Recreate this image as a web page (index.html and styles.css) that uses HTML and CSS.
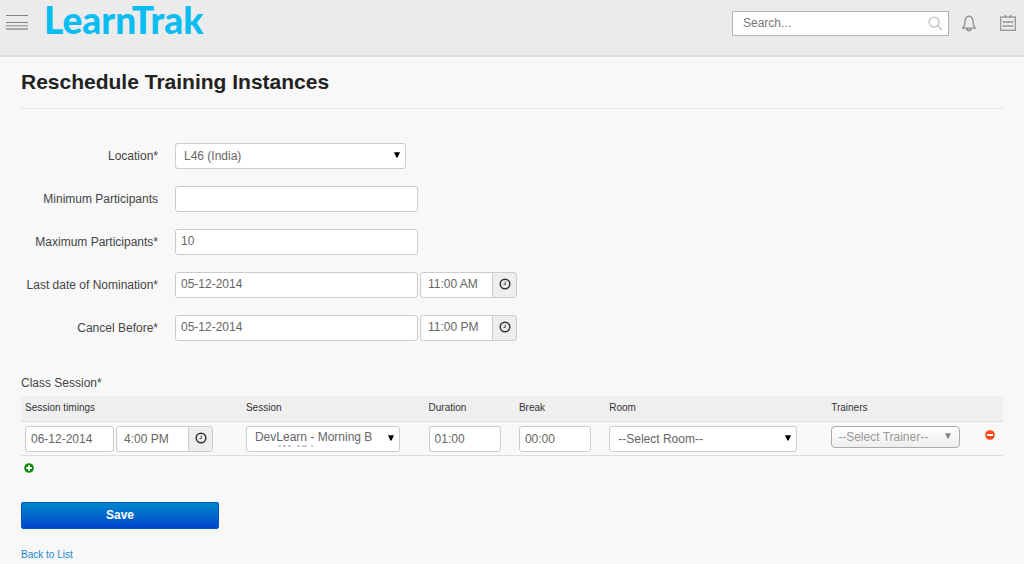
FILE: index.html
```html
<!DOCTYPE html>
<html lang="en">
<head>
<meta charset="utf-8">
<meta name="viewport" content="width=device-width, initial-scale=1">
<title>LearnTrak - Reschedule Training Instances</title>
<link rel="stylesheet" href="styles.css">
</head>
<body>
<svg class="defs" aria-hidden="true">
  <symbol id="clock" viewBox="0 0 12 12"><circle cx="6" cy="6" r="4.8" fill="none" stroke="#333" stroke-width="1.5"/><path d="M6.3 3.5V6.5H4.5" fill="none" stroke="#5a3a66" stroke-width="1"/></symbol>
  <symbol id="arrow" viewBox="0 0 8 8"><path d="M1 1.2H7L4.6 6.4H3.4Z" fill="currentColor"/></symbol>
</svg>

<header class="topbar">
  <button class="icon-button menu" type="button" aria-label="Menu">
    <svg width="22" height="16" viewBox="0 0 22 16"><path d="M0 1.5H22M0 8.5H22" stroke="#858585"/><path d="M0 11.8H22" stroke="#989898" stroke-width="1.2"/><path d="M0 15H22" stroke="#a9a9a9" stroke-width="2"/></svg>
  </button>
  <a class="logo" href="#">LearnTrak</a>
  <form class="search" role="search">
    <input class="search-input" type="text" placeholder="Search..." aria-label="Search">
    <button class="icon-button search-button" type="button" aria-label="Search">
      <svg width="15" height="15" viewBox="0 0 16 16" fill="none" stroke="#c4c4c4" stroke-width="1.5"><circle cx="6.5" cy="6.5" r="5.3"/><path d="M10.4 10.4L15 15"/></svg>
    </button>
  </form>
  <button class="icon-button bell" type="button" aria-label="Notifications">
    <svg width="14" height="17" viewBox="0 0 14 17" fill="none" stroke="#8c8c8c" stroke-width="1.3"><path d="M5.4 1.7C5.8 .8 8.2 .8 8.6 1.7C10.8 2.7 11.2 5 11.2 8C11.2 10.4 12 11 13.2 13.1H.8C2 11 2.8 10.4 2.8 8C2.8 5 3.2 2.7 5.4 1.7Z"/><path d="M5 13.6C5.2 16.2 8.8 16.2 9 13.6" stroke-width="1.6"/></svg>
  </button>
  <button class="icon-button" type="button" aria-label="Calendar">
    <svg width="16" height="16" viewBox="0 0 16 16" fill="none" stroke="#969696"><rect x=".7" y="2" width="14.6" height="13.3" stroke-width="1.3"/><path d="M5.5 0V3M10.5 0V3" stroke-width="1.6"/><path d="M3 7H13M3 11H13" stroke-width="1.8" stroke-dasharray="2 .6"/></svg>
  </button>
</header>

<main class="page">
  <h1 class="title">Reschedule Training Instances</h1>
  <form>
    <div class="fields">
      <div class="field">
        <label class="label" for="location">Location*</label>
        <span class="select-wrap location">
          <select class="control select" id="location"><option>L46 (India)</option></select>
          <svg class="arrow"><use href="#arrow"/></svg>
        </span>
      </div>
      <div class="field">
        <label class="label" for="minimum">Minimum Participants</label>
        <input class="control wide" id="minimum" type="text">
      </div>
      <div class="field">
        <label class="label" for="maximum">Maximum Participants*</label>
        <input class="control wide" id="maximum" type="text" value="10">
      </div>
      <div class="field">
        <label class="label" for="nomination">Last date of Nomination*</label>
        <input class="control wide" id="nomination" type="text" value="05-12-2014">
        <span class="time">
          <input class="control time-input" type="text" value="11:00 AM" aria-label="Last nomination time">
          <button class="time-button" type="button" aria-label="Pick time"><svg class="clock"><use href="#clock"/></svg></button>
        </span>
      </div>
      <div class="field">
        <label class="label" for="cancel">Cancel Before*</label>
        <input class="control wide" id="cancel" type="text" value="05-12-2014">
        <span class="time">
          <input class="control time-input" type="text" value="11:00 PM" aria-label="Cancel before time">
          <button class="time-button" type="button" aria-label="Pick time"><svg class="clock"><use href="#clock"/></svg></button>
        </span>
      </div>
    </div>

    <h2 class="subtitle" id="sessions-title">Class Session*</h2>
    <table class="sessions" aria-labelledby="sessions-title">
      <colgroup><col class="c-timing"><col class="c-session"><col class="c-short"><col class="c-short"><col class="c-room"><col class="c-trainer"><col class="c-remove"></colgroup>
      <thead>
        <tr><th>Session timings</th><th>Session</th><th>Duration</th><th>Break</th><th>Room</th><th>Trainers</th><th></th></tr>
      </thead>
      <tbody>
        <tr>
          <td>
            <div class="timing">
              <input class="control date" type="text" value="06-12-2014" aria-label="Session date">
              <span class="time">
                <input class="control time-input" type="text" value="4:00 PM" aria-label="Session time">
                <button class="time-button" type="button" aria-label="Pick time"><svg class="clock"><use href="#clock"/></svg></button>
              </span>
            </div>
          </td>
          <td>
            <span class="select-wrap session">
              <select class="control select" aria-label="Session"><option>DevLearn - Morning B</option></select>
              <svg class="arrow"><use href="#arrow"/></svg>
              <svg class="clipped-line" viewBox="0 0 36 2" aria-hidden="true"><path d="M0 1H3M5 1H8M10 1H13M19 1H22M24 1H29M33 1H35" stroke="#9a9a9a"/></svg>
            </span>
          </td>
          <td><input class="control short" type="text" value="01:00" aria-label="Duration"></td>
          <td><input class="control short" type="text" value="00:00" aria-label="Break"></td>
          <td>
            <span class="select-wrap room">
              <select class="control select" aria-label="Room"><option>--Select Room--</option></select>
              <svg class="arrow"><use href="#arrow"/></svg>
            </span>
          </td>
          <td>
            <span class="select-wrap trainer">
              <select class="control select" aria-label="Trainers"><option>--Select Trainer--</option></select>
              <svg class="arrow"><use href="#arrow"/></svg>
            </span>
          </td>
          <td class="remove">
            <button class="icon-button" type="button" aria-label="Remove session">
              <svg width="10" height="10" viewBox="0 0 10 10"><circle cx="5" cy="5" r="4.8" fill="#ff4314"/><path d="M2 5H8" stroke="#fff" stroke-width="2"/></svg>
            </button>
          </td>
        </tr>
      </tbody>
    </table>
    <button class="icon-button add" type="button" aria-label="Add session">
      <svg width="10" height="10" viewBox="0 0 10 10"><circle cx="5" cy="5" r="4.8" fill="#0d870d"/><path d="M2.2 5H7.8M5 2.2V7.8" stroke="#fff" stroke-width="1.8"/></svg>
    </button>
    <button class="save" type="button">Save</button>
    <a class="back" href="#">Back to List</a>
  </form>
</main>
</body>
</html>
```
FILE: styles.css
```css
* { box-sizing: border-box; }

body {
  margin: 0;
  background: #f8f8f8;
  color: #444;
  font: 12px/16px "Liberation Sans", Arial, sans-serif;
}

input, select, button { font: inherit; margin: 0; }

.defs { display: none; }

.icon-button {
  display: flex;
  padding: 0;
  border: 0;
  background: none;
}

.topbar {
  display: flex;
  align-items: flex-start;
  padding: 0 8px 0 6px;
  height: 57px;
  background: #ebebeb;
  border-bottom: 2px solid #dedede;
}

.topbar > .icon-button { margin-top: 15px; }
.topbar > .menu { margin-top: 14px; }

.logo {
  margin: 0 auto 0 16px;
  color: #08bdf2;
  font: 900 37px/40px Lato, sans-serif;
  text-decoration: none;
}

.search {
  display: flex;
  align-items: center;
  width: 217px;
  height: 25px;
  margin-top: 11px;
  padding: 0 5px 0 10px;
  background: #fff;
  border: 1px solid #b4b4b4;
}

.search-input {
  flex: 1;
  min-width: 0;
  padding: 0 0 2px;
  border: 0;
  background: none;
}

.search-input::placeholder { color: #777; opacity: 1; }

.bell { margin: 0 24px 0 13px; }

.page { padding: 0 21px; }

.title {
  margin: 0;
  padding: 13px 0 14px;
  border-bottom: 1px solid #e6e6e6;
  color: #222;
  font-size: 21px;
  line-height: 24px;
}

.fields {
  display: grid;
  gap: 17px;
  padding: 34px 0;
}

.field { display: flex; align-items: center; }

.label {
  width: 137px;
  margin-right: 17px;
  text-align: right;
}

.control {
  height: 26px;
  padding: 0 5px 2px;
  background: #fff;
  border: 1px solid #ccc;
  border-radius: 3px;
  color: #666;
}

.wide { width: 243px; }
.field .time { margin-left: 2px; }
.time { display: flex; width: 97px; }

.time-input {
  flex: 1;
  min-width: 0;
  padding-left: 7px;
  border-radius: 3px 0 0 3px;
}

.time-button {
  display: grid;
  place-items: center;
  width: 25px;
  padding: 0 0 2px;
  margin-left: -1px;
  background: #eee;
  border: 1px solid #ccc;
  border-radius: 0 3px 3px 0;
}

.clock { width: 12px; height: 12px; }

.select-wrap { display: block; position: relative; }

.select {
  display: block;
  width: 100%;
  padding: 0 24px 0 8px;
  appearance: none;
}

.arrow {
  position: absolute;
  top: 8px;
  right: 5px;
  width: 8px;
  height: 8px;
  color: #000;
  pointer-events: none;
}

.location { width: 231px; }
.session { width: 154px; }
.room { width: 188px; }
.trainer { width: 129px; }
.short { width: 72px; }
.date { width: 89px; }

.clipped-line {
  position: absolute;
  left: 32px;
  top: 19px;
  width: 36px;
  height: 2px;
  pointer-events: none;
}

.subtitle {
  margin: 0;
  padding-bottom: 5px;
  font-size: 12px;
  font-weight: normal;
}

.sessions {
  width: 100%;
  table-layout: fixed;
  border-collapse: collapse;
}

.c-timing { width: 22.5%; }
.c-session { width: 18.6%; }
.c-short { width: 9.2%; }
.c-room { width: 22.6%; }
.c-trainer { width: 15.3%; }

.sessions th {
  height: 25px;
  padding: 0 4px;
  background: #efefef;
  border-bottom: 1px solid #e0e0e0;
  color: #333;
  font-size: 10px;
  font-weight: normal;
  text-align: left;
}

.sessions td {
  padding: 4px 4px 3px;
  border-bottom: 1px solid #ddd;
  vertical-align: top;
}

.sessions .control { display: block; }
.sessions .short, .sessions .date, .sessions .time-input, .room .select { padding-bottom: 0; }
.timing { display: flex; gap: 2px; }

.sessions .session .select { padding-bottom: 3px; }

.sessions .trainer .select {
  height: 22px;
  padding-left: 6px;
  border-color: #aaa;
  border-radius: 4px;
  background: linear-gradient(#fff, #eee);
  color: #999;
}

.trainer .arrow { top: 6px; right: 8px; color: #888; }

.sessions .remove { padding: 8px; }
.remove .icon-button { margin-left: auto; }

.add { margin: 7px 0 0 3px; }

.save {
  display: block;
  width: 198px;
  height: 27px;
  margin: 29px 0 17px;
  padding: 0;
  border: 1px solid #0058c4;
  border-radius: 2px;
  background: linear-gradient(#0088cc, #0044cc);
  color: #fff;
  font-weight: bold;
}

.back {
  color: #1a87cc;
  font-size: 10px;
  text-decoration: none;
}
```
